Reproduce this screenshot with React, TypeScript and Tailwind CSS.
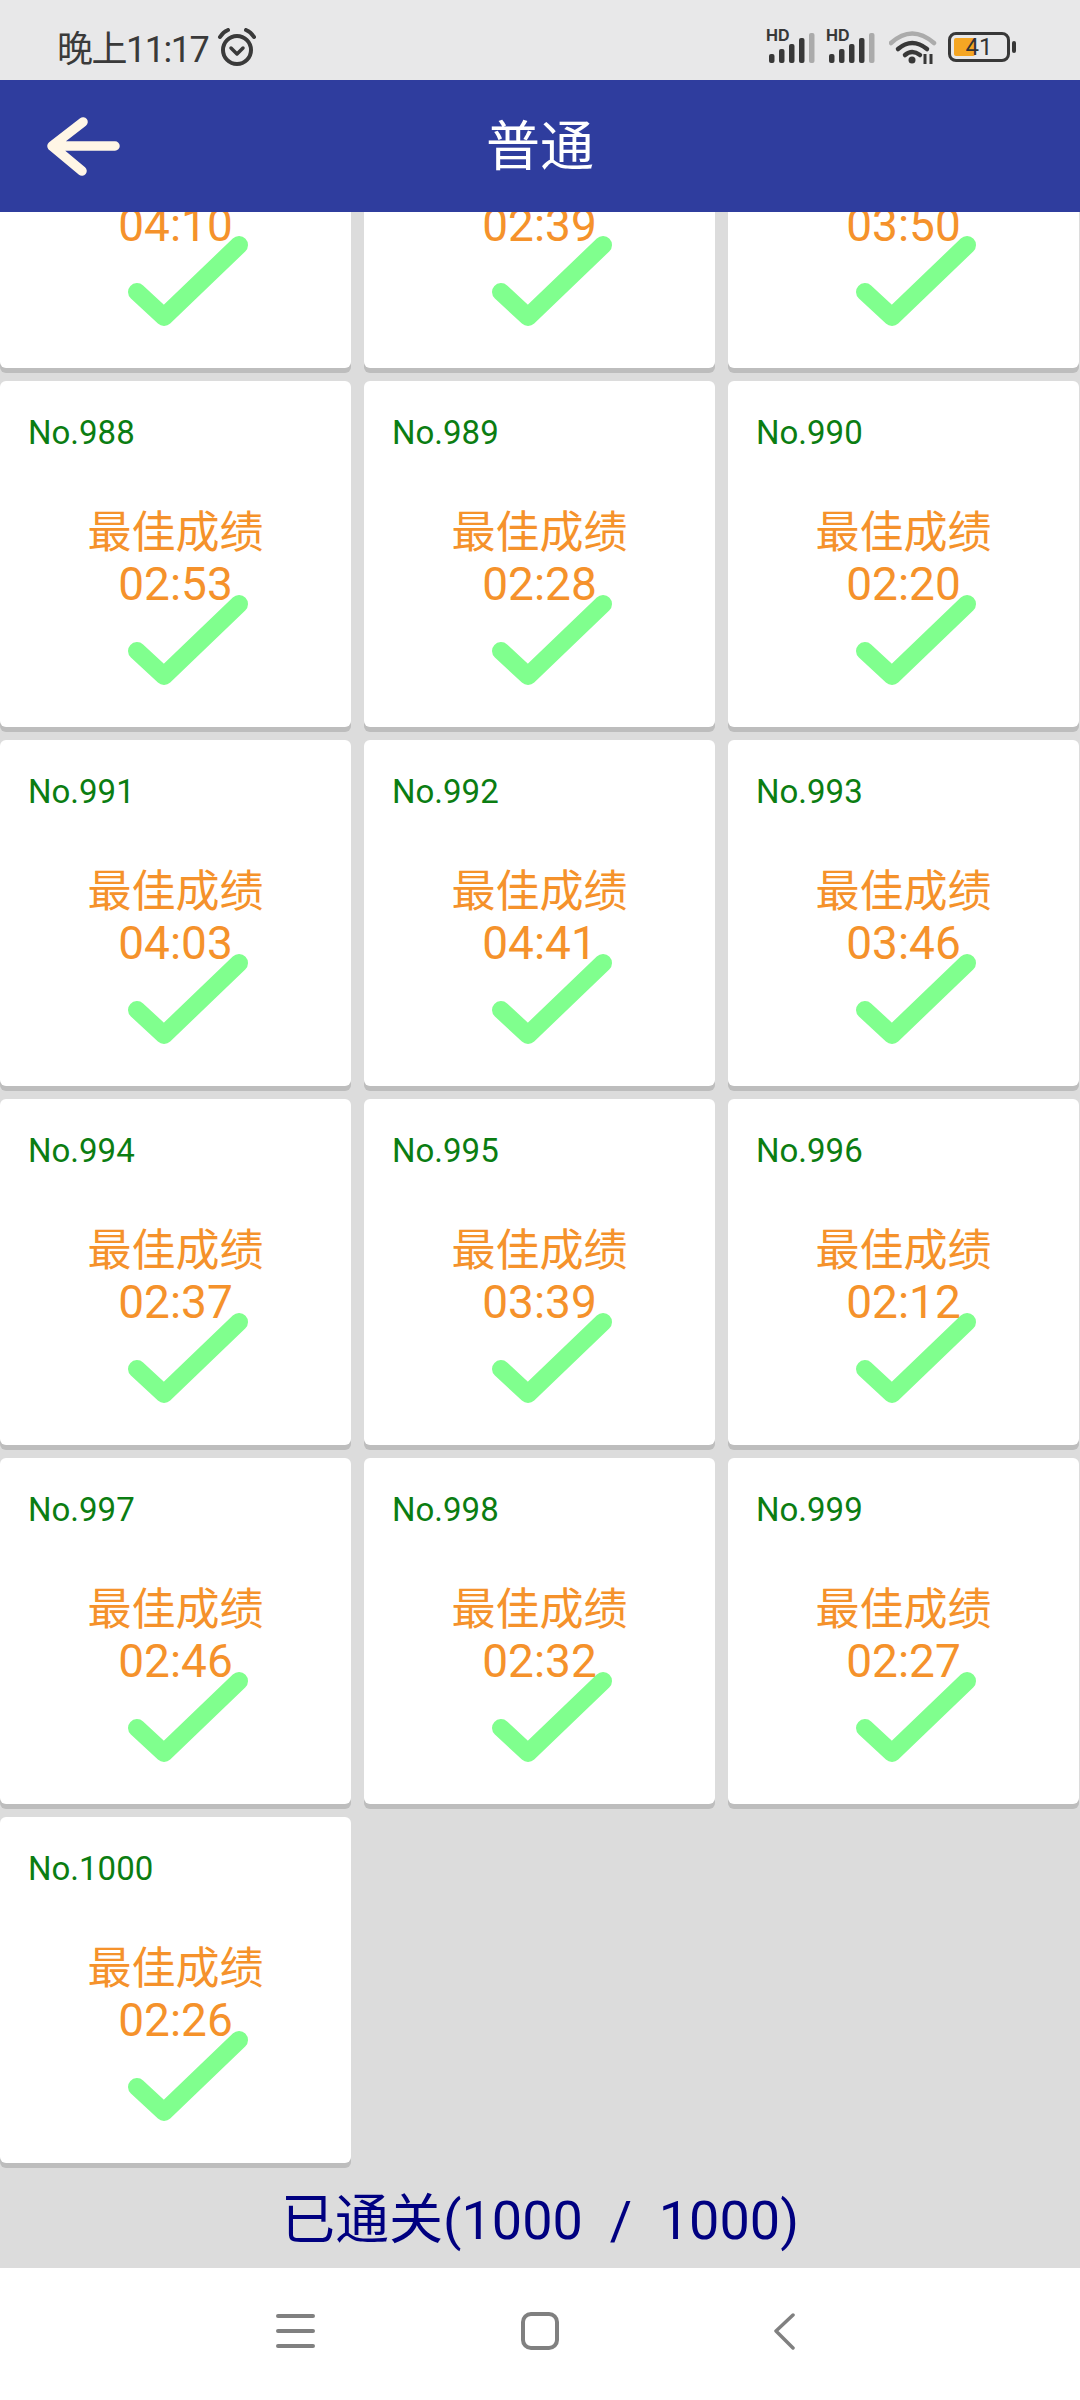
const FONT = { fontFamily: 'Roboto, "Noto Sans CJK SC", "Noto Sans", sans-serif' };

const cards: [string, string][] = [
  ['985', '04:10'], ['986', '02:39'], ['987', '03:50'],
  ['988', '02:53'], ['989', '02:28'], ['990', '02:20'],
  ['991', '04:03'], ['992', '04:41'], ['993', '03:46'],
  ['994', '02:37'], ['995', '03:39'], ['996', '02:12'],
  ['997', '02:46'], ['998', '02:32'], ['999', '02:27'],
  ['1000', '02:26'],
];

function Signal() {
  const bars: [number, number, string][] = [
    [2, 9, '#383838'], [12, 14, '#383838'], [22, 19, '#383838'], [32, 25, '#383838'], [42, 30, '#ababab'],
  ];
  return (
    <svg width="50" height="34" viewBox="0 0 50 34" className="overflow-visible">
      <text x="-1" y="11" fontSize="16" fontWeight="700" fill="#383838" fontFamily="Inter, sans-serif">HD</text>
      {bars.map(([x, h, c]) => (
        <rect key={x} x={x} y={33 - h} width="5.5" height={h} rx="2" fill={c} />
      ))}
    </svg>
  );
}

function Card({ no, time }: { no: string; time: string }) {
  return (
    <div className="relative h-[346px] rounded-[6px] bg-white shadow-[0_5px_0_#bdbdbd] pl-[28px] pt-[29px]">
      <div className="text-[33px] leading-[46px] text-[#0b7d12]">No.{no}</div>
      <div className="absolute left-0 right-0 top-[126px] text-center text-[44px] leading-[53px] text-[#f5922b]">
        <div>最佳成绩</div>
        <div className="-mt-[2px] text-[46px]">{time}</div>
      </div>
      <svg className="absolute left-[125px] top-[209px]" width="124" height="98" viewBox="0 0 124 98">
        <path d="M12 61 L39 86 L114 14" fill="none" stroke="#80ff8e" strokeWidth="18" strokeLinecap="round" strokeLinejoin="round" />
      </svg>
    </div>
  );
}

export default function App() {
  return (
    <div className="flex h-[2400px] w-[1080px] flex-col overflow-hidden bg-[#dcdcdc]" style={FONT}>
      <div className="flex h-[80px] shrink-0 items-center bg-[#e8e8e9] pl-[57px] pt-[14px]">
        <span className="pt-[5px] text-[36px] leading-[40px] tracking-[-1.5px] text-[#3a3a3a]">晚上11:17</span>
        <svg className="ml-[9px] mt-[2px]" width="40" height="40" viewBox="0 0 40 40">
          <circle cx="20" cy="22" r="14" fill="none" stroke="#3a3a3a" strokeWidth="4" />
          <path d="M14 20 L20 26 L26 20" fill="none" stroke="#3a3a3a" strokeWidth="3.5" strokeLinecap="round" strokeLinejoin="round" />
          <path d="M3 9 Q6 4 11 2 M37 9 Q34 4 29 2" fill="none" stroke="#3a3a3a" strokeWidth="4" strokeLinecap="round" />
        </svg>
        <div className="ml-auto flex items-center pr-[70px]">
          <Signal />
          <div className="ml-[10px]"><Signal /></div>
          <svg className="ml-[12px]" width="48" height="34" viewBox="0 0 48 34">
            <path d="M2 13 Q23 -6 45 13" fill="none" stroke="#ababab" strokeWidth="4.5" strokeLinecap="round" />
            <path d="M9 19 Q23 7 38 19" fill="none" stroke="#383838" strokeWidth="4.5" strokeLinecap="round" />
            <path d="M16 25 Q23 19 31 25" fill="none" stroke="#383838" strokeWidth="4.5" strokeLinecap="round" />
            <circle cx="23" cy="30" r="3.5" fill="#383838" />
            <path d="M36 34 V24 M42 34 V24" stroke="#383838" strokeWidth="3" />
          </svg>
          <div className="relative ml-[11px] h-[30px] w-[62px] rounded-[8px] border-[3px] border-[#383838]">
            <div className="absolute bottom-[3px] left-[3px] top-[3px] w-[21px] rounded-[2px] bg-[#f5a623]" />
            <div className="absolute inset-0 text-center text-[24px] leading-[24px] text-[#333333]">41</div>
            <div className="absolute right-[-9px] top-[6px] h-[12px] w-[4px] rounded-[2px] bg-[#383838]" />
          </div>
        </div>
      </div>

      <div className="relative z-10 flex h-[132px] shrink-0 items-center justify-center bg-[#2f3d9e] pt-[4px]">
        <svg className="absolute left-[41px] top-[36px]" width="86" height="60" viewBox="0 0 86 60">
          <path d="M42 10 L11 34 L41 59 M11 34 L74 34" transform="translate(0 -4)" fill="none" stroke="#fff6e6" strokeWidth="9.5" strokeLinecap="round" strokeLinejoin="round" />
        </svg>
        <span className="text-[54px] leading-[60px] text-white">普通</span>
      </div>

      <div className="min-h-0 flex-1 overflow-hidden">
        <div className="-mt-[190px] grid grid-cols-[351px_351px_351px] gap-x-[13px] gap-y-[13px]">
          {cards.map(([no, time]) => (
            <Card key={no} no={no} time={time} />
          ))}
        </div>
      </div>

      <div className="flex h-[100px] shrink-0 items-center justify-center pt-[5px] text-[54px] leading-[60px] text-[#000080]">
        <span className="whitespace-pre">已通关(1000  /  1000)</span>
      </div>

      <div className="flex h-[132px] shrink-0 items-center bg-white pb-[6px]">
        <svg className="ml-[276px]" width="40" height="36" viewBox="0 0 40 36">
          <path d="M2 3 H37 M2 18 H37 M2 33 H37" stroke="#808080" strokeWidth="4" strokeLinecap="round" />
        </svg>
        <svg className="ml-[205px]" width="38" height="38" viewBox="0 0 38 38">
          <rect x="2" y="2" width="34" height="34" rx="8" fill="none" stroke="#808080" strokeWidth="4" />
        </svg>
        <svg className="ml-[211px]" width="28" height="38" viewBox="0 0 28 38">
          <path d="M23 3 L6 19 L23 36" fill="none" stroke="#808080" strokeWidth="3.5" strokeLinecap="round" strokeLinejoin="round" />
        </svg>
      </div>
    </div>
  );
}
